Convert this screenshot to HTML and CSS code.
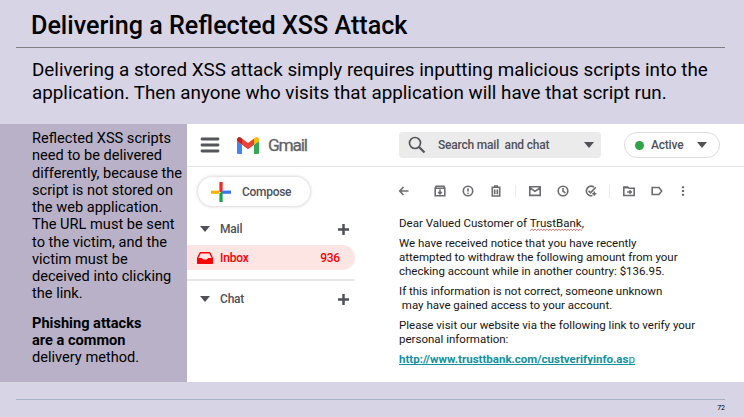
FILE: index.html
```html
<!DOCTYPE html>
<html lang="en">
<head>
<meta charset="utf-8">
<title>Delivering a Reflected XSS Attack</title>
<link rel="stylesheet" href="styles.css">
</head>
<body>
<div class="slide">
  <header class="slide-header"><h1>Delivering a Reflected XSS Attack</h1></header>
  <p class="intro">Delivering a stored XSS attack simply requires inputting malicious scripts into the<br>application. Then anyone who visits that application will have that script run.</p>
  <main class="content">
    <aside class="notes">
      <p>Reflected XSS scripts<br>need to be delivered<br>differently, because the<br>script is not stored on<br>the web application.<br>The URL must be sent<br>to the victim, and the<br>victim must be<br>deceived into clicking<br>the link.</p>
      <p><b>Phishing attacks<br>are a common</b><br>delivery method.</p>
    </aside>
    <section class="gmail">
      <div class="topbar">
        <svg class="menu" width="20" height="18" viewBox="0 0 20 18"><path d="M2 3h16M2 9h16M2 15h16" stroke="#55565b" stroke-width="2.8" stroke-linecap="round"/></svg>
        <svg class="logo" width="22" height="17" viewBox="0 0 22 17"><path d="M0 4l5 3.7V17H1.5Q0 17 0 15.5z" fill="#4285f4"/><path d="M17 7.7L22 4v11.500Q22 17 20.500 17H17z" fill="#34a853"/><path d="M17 1.500L18.200.6C19.800-.6 22 .4 22 2.500V4l-5 3.800z" fill="#fbbc04"/><path d="M5 7.800V1.500L11 6l6-4.500v6.300l-6 4.500z" fill="#ea4335"/><path d="M0 4V2.500C0 .4 2.200-.6 3.800.6L5 1.500v6.300z" fill="#c5221f"/></svg>
        <span class="brand">Gmail</span>
        <div class="search">
          <svg width="18" height="18" viewBox="0 0 18 18" fill="none" stroke="#55565b"><circle cx="7" cy="7" r="5.500" stroke-width="1.700"/><path d="M11 11l5.500 5.500" stroke-width="2.300"/></svg>
          <span>Search mail&nbsp; and chat</span>
          <i class="caret"></i>
        </div>
        <div class="status"><i class="dot"></i><span>Active</span><i class="caret"></i></div>
      </div>
      <div class="workspace">
        <nav class="folders">
          <div class="compose">
            <svg width="20" height="20" viewBox="0 0 20 20"><path d="M8.400 0h3.200v10H8.400z" fill="#f22"/><path d="M0 8.600h8.400v3.200H0z" fill="#fbb308"/><path d="M10 8.600h10v3.200H10z" fill="#3973f5"/><path d="M8.400 11.600L11.600 9v11H8.400z" fill="#13a34a"/></svg>
            <span>Compose</span>
          </div>
          <div class="group mail"><i class="caret"></i><span>Mail</span><svg width="11" height="11" viewBox="0 0 11 11"><path d="M5.500 0v11M0 5.500h11" stroke="#505158" stroke-width="2.500"/></svg></div>
          <div class="inbox"><svg width="16" height="12" viewBox="0 0 16 12"><path d="M3.300 .7h9.400l2.600 5.300v5.300H.7V6z" fill="none" stroke="#f00" stroke-width="1.400" stroke-linejoin="round"/><path d="M.7 6h4l1.500 1.500h3.600l1.500-1.500h4v5.300H.7z" fill="#f00"/></svg><span>Inbox</span><span class="count">936</span></div>
          <div class="divider"></div>
          <div class="group chat"><i class="caret"></i><span>Chat</span><svg width="11" height="11" viewBox="0 0 11 11"><path d="M5.500 0v11M0 5.500h11" stroke="#505158" stroke-width="2.500"/></svg></div>
        </nav>
        <article class="message">
          <div class="toolbar">
            <svg class="back" viewBox="0 0 12 12"><path d="M10.500 6H2M5.500 2L1.700 6l3.800 4"/></svg>
            <svg class="archive" viewBox="0 0 12 12"><path d="M1.200 3v7.800h9.600V3L9.800 1.200H2.200zM1.200 3.200h9.600" /><path d="M6 4.500v4.200M4.200 7L6 8.800 7.800 7"/></svg>
            <svg viewBox="0 0 12 12"><circle cx="6" cy="6" r="4.700"/><path d="M6 3.200v3.400M6 7.700v1.200"/></svg>
            <svg viewBox="0 0 12 12"><path d="M2.300 3v8h7.400V3M1.500 2.200h9M4 1h4M4.700 4.500v4.800M7.300 4.500v4.800"/></svg>
            <i class="bar"></i>
            <svg viewBox="0 0 12 12"><path d="M.8 1.800h10.400v8.600H.8zM1.200 3L6 6.300 10.800 3"/></svg>
            <svg viewBox="0 0 12 12"><circle cx="6" cy="6" r="4.800"/><path d="M6 3v3.200l2.500 1.600"/></svg>
            <svg viewBox="0 0 12 12"><path d="M9 2.100a4.800 4.800 0 1 0-1.600 8.500M3.500 5.800l2 2 5.300-5.500M9.300 6.600v4.200M7.200 8.700h4.200"/></svg>
            <i class="bar"></i>
            <svg viewBox="0 0 12 12"><path d="M.8 2h3.800L6 3.300h5.200v7.200H.8zM4 7h4.200M6.500 5.200L8.300 7 6.500 8.800"/><path d="M1 2.600h4"/></svg>
            <svg viewBox="0 0 12 12"><path d="M1.200 2.500h6.700L10.700 6 7.900 9.500H1.200z"/></svg>
            <svg class="more" viewBox="0 0 12 12"><path d="M6 1.200v2M6 5v2M6 8.800v2" stroke-width="2.200"/></svg>
          </div>
          <div class="letter">
            <p>Dear Valued Customer of <span class="typo">TrustBank</span>,</p>
            <p>We have received notice that you have recently<br>attempted to withdraw the following amount from your<br>checking account while in another country: $136.95.</p>
            <p>If this information is not correct, someone unknown<br>&nbsp;may have gained access to your account.</p>
            <p>Please visit our website via the following link to verify your<br>personal information:</p>
            <p class="link"><b>http://www.trusttbank.com/custverifyinfo.as</b>p</p>
          </div>
        </article>
      </div>
    </section>
  </main>
  <footer class="slide-footer">72</footer>
</div>
</body>
</html>
```
FILE: styles.css
```css
* { box-sizing: border-box; }
body { margin: 0; font-family: Roboto, sans-serif; color: #000; }
h1, p { margin: 0; }
svg { display: block; flex: none; }
.slide {
  width: 744px; height: 417px; overflow: hidden;
  background: #d7d4e5;
  display: grid; grid-template-rows: 48px 76px 258px 35px;
  white-space: nowrap;
}
.slide-header { margin: 0 19px 0 16px; padding: 11px 0 0 15px; border-bottom: 1px solid #807f83; }
h1 { font-size: 25.130px; line-height: 30px; font-weight: 500; }
.intro { padding: 11px 0 0 32px; font-size: 18.820px; line-height: 23px; }
.content { display: grid; grid-template-columns: 187px 557px; }
.notes { background: #b8b1c8; padding: 6px 0 0 32px; font-size: 14.600px; line-height: 17.250px; }
.notes p + p { margin-top: 12.300px; }
.gmail { background: #fff; display: grid; grid-template-rows: 43px 215px; color: #505158; font-weight: 500; font-size: 12px; }
.topbar { display: flex; align-items: center; border-bottom: 1px solid #e3e3e3; padding-left: 13px; }
.logo { margin-left: 17px; }
.brand { width: 43px; margin-left: 9px; font-size: 17.300px; font-weight: 400; letter-spacing: -1.200px; color: #5f6368; -webkit-text-stroke: .3px #5f6368; }
.caret { width: 0; height: 0; border: 5px solid transparent; border-top: 6px solid #505158; border-bottom: 0; }
.search { display: flex; align-items: center; margin-left: 88px; width: 202px; height: 26px; padding: 0 7px 0 9px; border-radius: 4px; background: #ebebeb; }
.search span { margin-left: 12px; letter-spacing: -.200px; }
.search .caret, .status .caret { margin-left: auto; }
.status { display: flex; align-items: center; margin-left: 23px; width: 96px; height: 26px; padding: 0 12px 0 10px; border: 1px solid #ddd; border-radius: 13px; }
.dot { width: 9px; height: 9px; border-radius: 50%; background: #2da44a; }
.status span { margin-left: 7px; letter-spacing: -.2px; }
.workspace { display: grid; grid-template-columns: 168px 389px; }
.compose { display: flex; align-items: center; width: 112px; height: 29px; margin: 10px 0 0 11px; padding-left: 13px; border-radius: 15px; box-shadow: 0 0 3px 1px #d9d9d9; }
.compose span { margin-left: 11px; letter-spacing: -.3px; }
.group { display: flex; align-items: center; height: 24px; padding: 0 6px 0 13px; }
.group span { margin-left: 10px; letter-spacing: -.2px; }
.group svg { margin-left: auto; }
.mail { margin-top: 11px; }
.inbox { display: flex; align-items: center; height: 25px; margin-top: 4px; padding: 0 15px 0 10px; border-radius: 0 13px 13px 0; background: #fde5e3; color: #f00; }
.inbox span { margin-left: 7px; letter-spacing: -.2px; }
.inbox .count { margin-left: auto; }
.divider { margin-top: 9px; height: 2px; background: #e8e8e8; }
.chat { margin-top: 6px; }
.message { padding-left: 44px; }
.toolbar { display: flex; align-items: center; height: 20px; margin: 14px 0 0 -1px; }
.toolbar svg { width: 12px; height: 12px; margin-left: 16px; fill: none; stroke: #6c6c70; stroke-width: 1.600; }
.toolbar .back { margin-left: 0; }
.toolbar .archive { margin-left: 24px; }
.toolbar .more { margin-left: 14px; }
.bar { width: 1px; height: 13px; margin-left: 12.500px; background: #e9e9e9; }
.toolbar .bar + svg { margin-left: 13px; }
.letter { margin-top: 15px; color: #151515; font-size: 11.500px; font-weight: 400; line-height: 14px; }
.letter p + p { margin-top: 6px; }
.typo {
  padding-bottom: 1px;
  background:
    linear-gradient(90deg, #f08080 50%, transparent 50%) 0 100% / 3px 1px repeat-x,
    linear-gradient(90deg, transparent 50%, #f08080 50%) 0 calc(100% - 1px) / 3px 1px repeat-x;
}
.link { color: #12919f; text-decoration: underline; text-decoration-skip-ink: none; }
.slide-footer { margin: 17px 19px 0 16px; border-top: 1px solid #a9b2c5; padding-top: 4px; text-align: right; font-size: 7px; line-height: 8px; }
```
